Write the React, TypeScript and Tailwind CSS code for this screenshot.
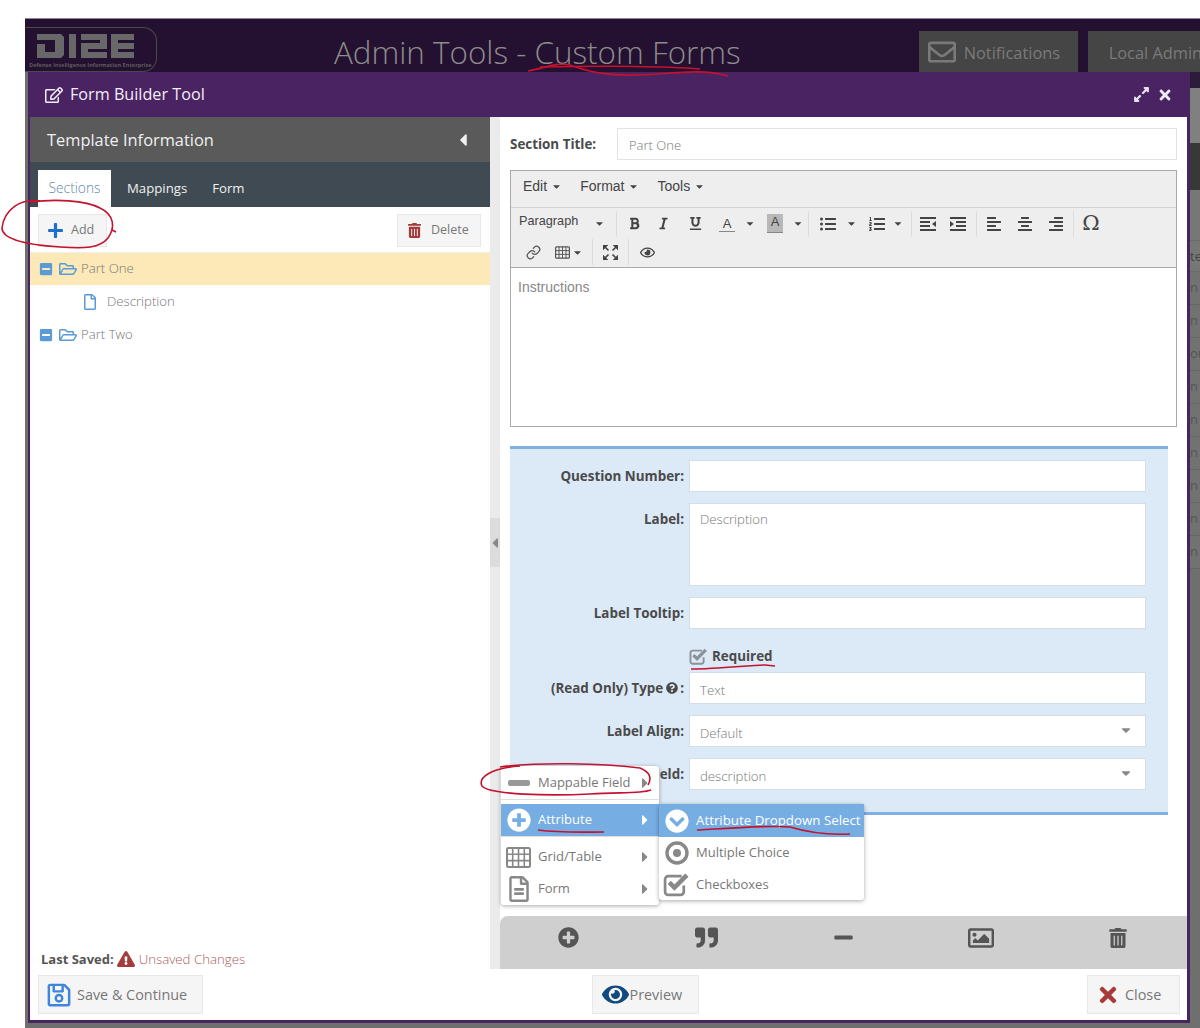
import type { ReactNode } from "react";
import { Link as LinkIcon } from "lucide-react";
import {
  FaAlignCenter,
  FaAlignLeft,
  FaAlignRight,
  FaBold,
  FaCaretDown,
  FaCaretLeft,
  FaCaretRight,
  FaChevronCircleDown,
  FaExclamationTriangle,
  FaExpandAlt,
  FaEye,
  FaItalic,
  FaListOl,
  FaListUl,
  FaMinus,
  FaMinusSquare,
  FaPlus,
  FaPlusCircle,
  FaQuestionCircle,
  FaQuoteRight,
  FaRegEdit,
  FaRegEnvelope,
  FaRegEye,
  FaRegFile,
  FaRegFileAlt,
  FaRegFolderOpen,
  FaRegImage,
  FaRegSave,
  FaTimes,
  FaTrashAlt,
  FaUnderline,
} from "react-icons/fa";

function CheckSquare({ size, className = "" }: { size: number; className?: string }) {
  return (
    <svg width={size} height={size} viewBox="0 0 26 26" className={`fill-none stroke-current ${className}`}>
      <path d="M20 14v6a3 3 0 0 1-3 3H5a3 3 0 0 1-3-3V8a3 3 0 0 1 3-3h13" strokeWidth="2.6" />
      <path d="M6 11l5 5L23 4" strokeWidth="4.4" />
    </svg>
  );
}

function GridIcon({ w, h, className = "" }: { w: number; h: number; className?: string }) {
  return (
    <svg width={w} height={h} viewBox="0 0 25 21" className={`fill-none stroke-current ${className}`}>
      <rect x="1" y="1" width="23" height="19" rx="1.5" strokeWidth="2" />
      <path d="M1 7.3H24M1 13.6H24M6.7 1V20M12.5 1V20M18.3 1V20" strokeWidth="1.6" />
    </svg>
  );
}

function DotCircle({ size, className = "" }: { size: number; className?: string }) {
  return (
    <svg width={size} height={size} viewBox="0 0 24 24" className={`stroke-current fill-none ${className}`}>
      <circle cx="12" cy="12" r="10" strokeWidth="3.4" />
      <circle cx="12" cy="12" r="4" className="fill-current" strokeWidth="0" />
    </svg>
  );
}

function OutdentIcon() {
  return (
    <svg width="16" height="14" viewBox="0 0 16 14" className="fill-[#444]">
      <path d="M0 0H16V2H0ZM0 4H10V6H0ZM0 8H10V10H0ZM0 12H16V14H0ZM16 4V10L12 7Z" />
    </svg>
  );
}

function IndentIcon() {
  return (
    <svg width="16" height="14" viewBox="0 0 16 14" className="fill-[#444]">
      <path d="M0 0H16V2H0ZM6 4H16V6H6ZM6 8H16V10H6ZM0 12H16V14H0ZM0 4V10L4 7Z" />
    </svg>
  );
}

function FullscreenIcon() {
  return (
    <svg width="15" height="15" viewBox="0 0 15 15" className="fill-[#444] stroke-[#444]">
      <path d="M0 0H5L0 5ZM15 0H10L15 5ZM0 15H5L0 10ZM15 15H10L15 10Z" strokeWidth="0.5" />
      <path d="M2 2L5.5 5.5M13 2L9.5 5.5M2 13L5.5 9.5M13 13L9.5 9.5" strokeWidth="1.6" />
    </svg>
  );
}

function Logo() {
  return (
    <div className="w-[132px] h-[45px] mt-[8px] border border-l-0 border-[#4a4a4a] rounded-r-[14px] shrink-0 pt-[6px] pl-[12px]">
      <svg width="97" height="24" viewBox="0 0 97 24" className="fill-[#686868] block">
        <path d="M0 0H24L27 3V21L24 24H0V10H8V18H18V6H0Z" />
        <rect x="32" y="0" width="7" height="24" />
        <path d="M44 0H70V15H51V18H70V24H44V9H63V6H44Z" />
        <path d="M74 0H97V6H81V9H97V15H81V18H97V24H74Z" />
      </svg>
      <p className="text-[5.6px] font-bold text-[#5c5c5c] whitespace-nowrap -ml-[8px] mt-[3px] leading-[8px]">
        Defense Intelligence Information Enterprise
      </p>
    </div>
  );
}

function Page() {
  return (
    <div className="ml-[25px] mt-[18px] h-[1010px] bg-[#6f6f6f] overflow-hidden">
      <div className="h-[54px] bg-[#241030] border-t border-[#8d8794] flex">
        <Logo />
        <h1 className="ml-[177px] mt-[13px] text-[31.4px] leading-[40px] font-light text-[#8c8c8c] whitespace-nowrap shrink-0">
          Admin Tools - Custom Forms
        </h1>
        <div className="ml-[178px] mt-[12px] h-[41px] w-[159px] shrink-0 bg-[#454545] flex items-center pl-[9px] gap-[8px] text-[#7a7a7a] text-[16.4px]">
          <FaRegEnvelope size={28} />
          <span className="pt-[3px]">Notifications</span>
        </div>
        <div className="ml-[10px] mt-[12px] h-[41px] w-[140px] shrink-0 bg-[#454545] flex items-center pl-[21px] pt-[3px] text-[#7a7a7a] text-[16.4px] whitespace-nowrap">
          Local Admin
        </div>
      </div>
      {/* table behind the dialog, only its right edge shows */}
      <div className="flex flex-col items-end text-[13px] text-[#444]">
        <div className="w-[10px] h-[16px] bg-[#2d1b3a]" />
        <div className="w-[10px] h-[55px] bg-[#808080]" />
        <div className="w-[10px] h-[47px] bg-[#383838]" />
        <div className="w-[10px] h-[50px] bg-[#777]" />
        <div className="w-[10px] h-[32px] bg-[#777] border-y border-[#6a6a6a] overflow-hidden leading-[30px]">te</div>
        {["n", "n", "ou", "n", "n", "n", "n", "n", "n"].map((t, i) => (
          <div
            key={i}
            className="w-[10px] h-[33px] bg-[#727272] border-b border-[#666] overflow-hidden leading-[30px] text-[#555]"
          >
            {t}
          </div>
        ))}
      </div>
    </div>
  );
}

function TreeRow({
  icon,
  label,
  active,
  indent,
}: {
  icon: ReactNode;
  label: string;
  active?: boolean;
  indent?: boolean;
}) {
  return (
    <div
      className={`h-[33px] flex items-center text-[13.2px] font-light text-[#777] ${
        active ? "bg-[#fde9b7] border-t border-[#eee]" : ""
      } ${indent ? "pl-[52px]" : "pl-[9px]"}`}
    >
      {icon}
      {label}
    </div>
  );
}

function LeftPanel() {
  return (
    <div className="w-[460px] shrink-0 flex flex-col">
      <div className="h-[45px] bg-[#5a5a5a] flex items-center justify-between pl-[17px] pr-[17px] pt-[1px] text-[16.4px] text-[#f0f0f0]">
        Template Information
        <FaCaretLeft size={20} />
      </div>
      <div className="h-[45px] bg-[#3f4a52] flex items-end pl-[8px] text-[13.2px] text-[#eef0f1]">
        <div className="w-[73px] h-[37px] bg-white text-[#5f89a8] font-light text-[13.8px] flex items-center justify-center">
          Sections
        </div>
        <div className="h-[37px] flex items-center ml-[16px]">Mappings</div>
        <div className="h-[37px] flex items-center ml-[25px]">Form</div>
      </div>
      <div className="h-[45px] flex items-center justify-between pl-[8px] pr-[9px] pt-[1px] text-[12.5px] text-[#777]">
        <div className="w-[69px] h-[33px] bg-[#f5f5f5] border border-[#e8e8e8] flex items-center pl-[8px] gap-[7px]">
          <FaPlus size={17} className="text-[#1b6fd0]" />
          Add
        </div>
        <div className="w-[84px] h-[33px] bg-[#f5f5f5] border border-[#e8e8e8] flex items-center pl-[9px] gap-[9px]">
          <FaTrashAlt size={15} className="text-[#a23a3a]" />
          Delete
        </div>
      </div>
      <TreeRow
        active
        label="Part One"
        icon={
          <>
            <FaMinusSquare size={14} className="text-[#5b9bd5] mr-[6px]" />
            <FaRegFolderOpen size={18} className="text-[#5b9bd5] mr-[4px]" />
          </>
        }
      />
      <TreeRow
        indent
        label="Description"
        icon={<FaRegFile size={16} className="text-[#5b9bd5] mr-[9px]" />}
      />
      <TreeRow
        label="Part Two"
        icon={
          <>
            <FaMinusSquare size={14} className="text-[#5b9bd5] mr-[6px]" />
            <FaRegFolderOpen size={18} className="text-[#5b9bd5] mr-[4px]" />
          </>
        }
      />
      <div className="mt-auto pl-[11px] h-[18px] flex items-center text-[13px] leading-none mb-[1px]">
        <span className="font-bold text-[#555]">Last Saved:</span>
        <FaExclamationTriangle size={18} className="text-[#a53c3c] mx-[3px]" />
        <span className="font-light text-[#ad5c5c] text-[13.25px] ml-[1px] pt-[1px]">Unsaved Changes</span>
      </div>
    </div>
  );
}

function Sep({ className = "" }: { className?: string }) {
  return <span className={`w-px h-[26px] bg-[#dcdcdc] mx-[5px] shrink-0 ${className}`} />;
}

function ToolBtn({ children, className = "" }: { children: ReactNode; className?: string }) {
  return <span className={`flex items-center justify-center h-[28px] shrink-0 ${className}`}>{children}</span>;
}

function Editor() {
  const caret = <FaCaretDown size={11} className="text-[#444]" />;
  return (
    <div className="h-[257px] border border-[#aaa] font-['Liberation_Sans',Arial,sans-serif] text-[#444] flex flex-col">
      <div className="h-[37px] bg-[#eee] border-b border-[#d2d2d2] flex items-center pl-[12px] pb-[6px] text-[14px] gap-[18px]">
        <span className="flex items-center gap-[4px]">Edit {caret}</span>
        <span className="flex items-center gap-[4px]">Format {caret}</span>
        <span className="flex items-center gap-[4px]">Tools {caret}</span>
      </div>
      <div className="h-[60px] bg-[#eee] border-b border-[#aaa] pl-[8px] pt-[1px]">
        <div className="flex items-center h-[29px]">
          <span className="text-[12.7px] w-[92px] flex items-center justify-between pr-[6px] -mt-[4px]">
            Paragraph <span className="mt-[4px]">{caret}</span>
          </span>
          <Sep />
          <ToolBtn className="w-[22px] ml-[1px]"><FaBold size={13} /></ToolBtn>
          <ToolBtn className="w-[36px]"><FaItalic size={13} /></ToolBtn>
          <ToolBtn className="w-[28px]"><FaUnderline size={13} /></ToolBtn>
          <ToolBtn className="w-[36px] flex-col text-[13px] leading-[15px]">
            A<span className="w-[16px] h-[1px] bg-[#888]" />
          </ToolBtn>
          <ToolBtn className="w-[10px]">{caret}</ToolBtn>
          <ToolBtn className="w-[36px] ml-[2px] flex-col text-[13px] leading-[15px]">
            <span className="w-[16px] h-[18px] bg-[#b8b8b8] text-center">A</span>
            <span className="w-[16px] h-[1px] bg-[#888]" />
          </ToolBtn>
          <ToolBtn className="w-[10px]">{caret}</ToolBtn>
          <Sep />
          <ToolBtn className="w-[28px]"><FaListUl size={16} /></ToolBtn>
          <ToolBtn className="w-[18px]">{caret}</ToolBtn>
          <ToolBtn className="w-[34px]"><FaListOl size={16} /></ToolBtn>
          <ToolBtn className="w-[8px]">{caret}</ToolBtn>
          <Sep className="ml-[9px]" />
          <ToolBtn className="w-[22px]"><OutdentIcon /></ToolBtn>
          <ToolBtn className="w-[26px] ml-[6px]"><IndentIcon /></ToolBtn>
          <Sep />
          <ToolBtn className="w-[24px]"><FaAlignLeft size={16} /></ToolBtn>
          <ToolBtn className="w-[38px]"><FaAlignCenter size={16} /></ToolBtn>
          <ToolBtn className="w-[24px]"><FaAlignRight size={16} /></ToolBtn>
          <Sep />
          <ToolBtn className="w-[24px] text-[21px] font-['DejaVu_Serif',serif]">Ω</ToolBtn>
        </div>
        <div className="flex items-center h-[28px]">
          <ToolBtn className="w-[28px] text-[#555]"><LinkIcon size={15} /></ToolBtn>
          <ToolBtn className="w-[40px] gap-[2px] pl-[4px]">
            <GridIcon w={15} h={13} className="text-[#555]" />
            {caret}
          </ToolBtn>
          <Sep />
          <ToolBtn className="w-[25px]"><FullscreenIcon /></ToolBtn>
          <Sep />
          <ToolBtn className="w-[26px]"><FaRegEye size={15} /></ToolBtn>
        </div>
      </div>
      <div className="flex-1 pl-[7px] pt-[10px] text-[14px] leading-[18px] text-[#888]">Instructions</div>
    </div>
  );
}

function Field({
  label,
  value,
  height = "h-[32px]",
  select,
  area,
}: {
  label: ReactNode;
  value?: string;
  height?: string;
  select?: boolean;
  area?: boolean;
}) {
  return (
    <div className="flex mb-[11px]">
      <div className="w-[175px] shrink-0 text-right font-bold text-[13.4px] leading-[32px] text-[#4a4a4a] whitespace-nowrap -ml-[1px] mr-[1px]">
        {label}
      </div>
      <div
        className={`ml-[4px] w-[457px] ${height} bg-white border border-[#d5dde6] pl-[10px] pr-[11px] flex justify-between text-[13.2px] font-light leading-[31px] text-[#777]`}
      >
        <span className={area ? "" : "pt-[2px]"}>{value}</span>
        {select && <FaCaretDown size={14} className="text-[#888] mt-[7px] mr-[1px]" />}
      </div>
    </div>
  );
}

function FieldPanel() {
  return (
    <div className="w-[658px] h-[369px] mt-[19px] bg-[#dce9f6] border-y-[3px] border-[#7fb0e2] pt-[11px]">
      <Field label="Question Number:" />
      <Field label="Label:" value="Description" height="h-[83px]" area />
      <Field label="Label Tooltip:" />
      <div className="flex items-center h-[18px] ml-[179px] mt-[18px] mb-[7px] font-bold text-[13.4px] text-[#4a4a4a] gap-[4px]">
        <CheckSquare size={19} className="text-[#8b9299]" />
        Required
      </div>
      <Field
        label={
          <span className="inline-flex items-center gap-[2px]">
            (Read Only) Type <FaQuestionCircle size={12} className="ml-[1px]" />:
          </span>
        }
        value="Text"
      />
      <Field label="Label Align:" value="Default" select />
      <Field label="Field:" value="description" select />
    </div>
  );
}

function RightPanel() {
  return (
    <div className="flex-1 min-w-0 flex flex-col relative">
      <div className="pl-[10px] pr-[10px] pt-[11px] flex-1">
        <div className="flex items-center h-[32px] mb-[10px]">
          <span className="w-[107px] shrink-0 font-bold text-[13.4px] text-[#4a4a4a]">Section Title:</span>
          <div className="flex-1 h-[32px] border border-[#e2e2e2] pl-[11px] text-[13px] font-light leading-[32px] text-[#777]">
            Part One
          </div>
        </div>
        <Editor />
        <FieldPanel />
      </div>
      <div className="h-[53px] bg-[#cfcfcf] rounded-tl-[8px] grid grid-cols-5 text-[#555] pb-[10px]">
        <span className="flex items-center justify-center"><FaPlusCircle size={21} /></span>
        <span className="flex items-center justify-center"><FaQuoteRight size={23} /></span>
        <span className="flex items-center justify-center"><FaMinus size={21} /></span>
        <span className="flex items-center justify-center"><FaRegImage size={26} /></span>
        <span className="flex items-center justify-center"><FaTrashAlt size={20} /></span>
      </div>
    </div>
  );
}

function MenuRow({
  icon,
  label,
  active,
  arrow,
  className = "",
}: {
  icon: ReactNode;
  label: string;
  active?: boolean;
  arrow?: boolean;
  className?: string;
}) {
  return (
    <div
      className={`flex items-center whitespace-nowrap ${
        active ? "bg-[#76ade2] text-white" : "text-[#777]"
      } ${className}`}
    >
      <span className="w-[37px] flex justify-center shrink-0 -ml-[1px] mr-[1px]">{icon}</span>
      {label}
      {arrow && (
        <FaCaretRight size={16} className={`ml-auto mr-[6px] ${active ? "text-white" : "text-[#888]"}`} />
      )}
    </div>
  );
}

function ContextMenu() {
  return (
    <>
      <div className="absolute left-[501px] top-[766px] w-[158px] h-[139px] bg-white rounded-[3px] text-[13px] shadow-[0_1px_4px_rgba(0,0,0,0.35)]">
        <MenuRow
          className="h-[33px]"
          label="Mappable Field"
          arrow
          icon={<span className="w-[22px] h-[6px] rounded-[2px] bg-[#999]" />}
        />
        <div className="h-px bg-[#ddd] mb-[4px]" />
        <MenuRow
          className="h-[32px]"
          active
          arrow
          label="Attribute"
          icon={<FaPlusCircle size={24} className="text-white" />}
        />
        <div className="h-px bg-[#ddd] mb-[4px]" />
        <MenuRow
          className="h-[32px]"
          arrow
          label="Grid/Table"
          icon={<GridIcon w={25} h={21} className="text-[#888]" />}
        />
        <MenuRow
          className="h-[32px]"
          arrow
          label="Form"
          icon={<FaRegFileAlt size={26} className="text-[#888]" />}
        />
      </div>
      <div className="absolute left-[659px] top-[804px] w-[205px] h-[96px] bg-white rounded-[3px] text-[13px] shadow-[0_1px_4px_rgba(0,0,0,0.35)]">
        <MenuRow
          className="h-[33px] text-[13.3px]"
          active
          label="Attribute Dropdown Select"
          icon={<FaChevronCircleDown size={24} className="text-white" />}
        />
        <MenuRow
          className="h-[32px]"
          label="Multiple Choice"
          icon={<DotCircle size={24} className="text-[#888]" />}
        />
        <MenuRow
          className="h-[31px]"
          label="Checkboxes"
          icon={<CheckSquare size={27} className="text-[#888]" />}
        />
      </div>
    </>
  );
}

function Dialog() {
  return (
    <div className="absolute left-[28px] top-[72px] w-[1162px] h-[951px] bg-white border-l-2 border-r-[3px] border-b-[3px] border-[#47255f] flex flex-col">
      <div className="h-[45px] shrink-0 bg-[#4a2362] flex items-center pl-[15px] pr-[14px] text-[#f3eef6] text-[16.2px]">
        <FaRegEdit size={18} className="mr-[7px]" />
        Form Builder Tool
        <FaExpandAlt size={17} className="ml-auto mr-[7px] text-[#e8e0ee]" />
        <FaTimes size={16} className="text-[#efeaf3]" />
      </div>
      <div className="flex-1 min-h-0 flex">
        <LeftPanel />
        <div className="w-[10px] shrink-0 bg-[#ebebeb] flex flex-col">
          <div className="h-[401px]" />
          <div className="h-[49px] bg-[#dcdcdc] flex items-center justify-center">
            <FaCaretLeft size={16} className="text-[#888]" />
          </div>
        </div>
        <RightPanel />
      </div>
      <div className="h-[51px] shrink-0 flex items-center justify-between pl-[8px] pr-[7px] text-[14.4px] text-[#777]">
        <div className="w-[165px] h-[39px] bg-[#f5f5f5] border border-[#e8e8e8] flex items-center pl-[7px] gap-[5px]">
          <FaRegSave size={26} className="text-[#3d86dc]" />
          Save &amp; Continue
        </div>
        <div className="w-[107px] h-[39px] bg-[#f5f5f5] border border-[#e8e8e8] flex items-center pl-[9px] gap-[1px]">
          <FaEye size={27} className="text-[#124a80]" />
          Preview
        </div>
        <div className="w-[93px] h-[39px] bg-[#f5f5f5] border border-[#e8e8e8] flex items-center pl-[8px] gap-[5px]">
          <FaTimes size={24} className="text-[#a83a3a]" />
          Close
        </div>
      </div>
    </div>
  );
}

// red pen marks someone drew on the screenshot
function PenMarks() {
  return (
    <svg
      width="1200"
      height="1028"
      viewBox="0 0 1200 1028"
      className="absolute left-0 top-0 pointer-events-none fill-none stroke-[#c4122f] stroke-[1.6]"
    >
      <path d="M528 71C545 68 556 62 570 65C585 70 600 76 640 75C670 74 700 68 728 76" />
      <path d="M540 67C590 66 660 66 700 69" />
      <path d="M40 201C20 198 4 210 2 228C2 240 30 245 60 247C85 249 100 248 108 238C115 228 115 215 100 208C85 200 55 199 30 202" />
      <path d="M112 230L116 232" />
      <path d="M500 767C540 762 600 763 640 768C650 772 652 778 648 785" />
      <path d="M651 790C640 794 620 792 590 794C550 796 490 795 482 786C478 778 490 768 520 766" />
      <path d="M538 830C560 833 585 832 604 832" />
      <path d="M697 830C730 828 770 825 790 827C810 833 830 835 850 834" />
      <path d="M691 669C720 669 750 665 765 665L775 666" />
    </svg>
  );
}

export default function App() {
  return (
    <div className="relative w-[1200px] h-[1028px] bg-white overflow-hidden font-['Open_Sans',sans-serif]">
      <Page />
      <Dialog />
      <ContextMenu />
      <PenMarks />
    </div>
  );
}
